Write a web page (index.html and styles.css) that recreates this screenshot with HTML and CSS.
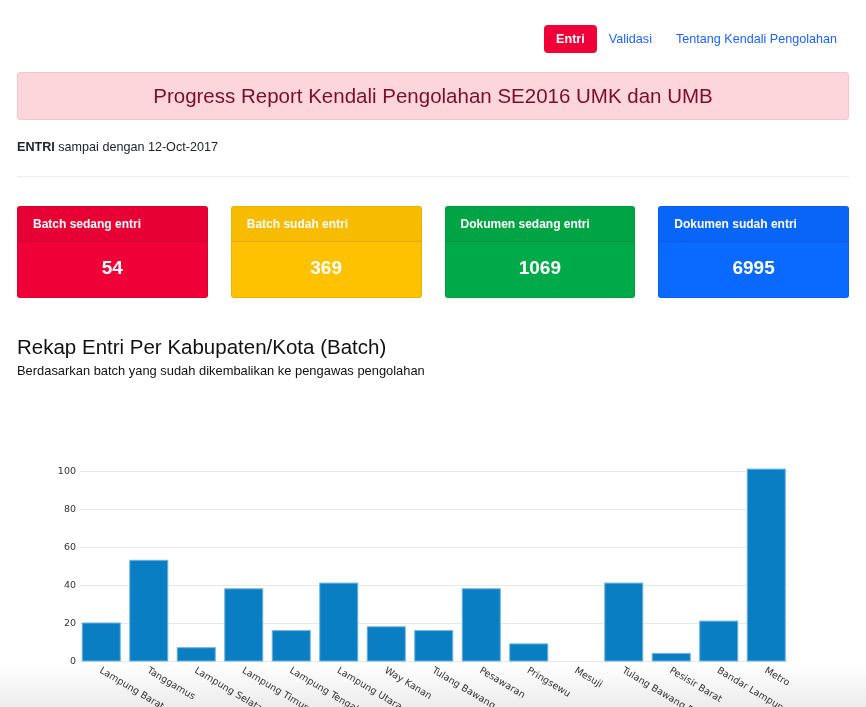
FILE: index.html
```html
<!DOCTYPE html>
<html lang="id">
<head>
<meta charset="utf-8">
<title>Progress Report Kendali Pengolahan</title>
<link rel="stylesheet" href="styles.css">
</head>
<body>
<div class="bottom-fade"></div>
<div class="container">
  <nav class="nav">
    <a class="nav-link active" href="#">Entri</a>
    <a class="nav-link" href="#">Validasi</a>
    <a class="nav-link" href="#">Tentang Kendali Pengolahan</a>
  </nav>

  <div class="alert">Progress Report Kendali Pengolahan SE2016 UMK dan UMB</div>

  <p class="status"><b>ENTRI</b> sampai dengan 12-Oct-2017</p>
  <hr class="divider">

  <div class="cards">
    <div class="card red"><div class="card-header">Batch sedang entri</div><div class="card-body">54</div></div>
    <div class="card yellow"><div class="card-header">Batch sudah entri</div><div class="card-body">369</div></div>
    <div class="card green"><div class="card-header">Dokumen sedang entri</div><div class="card-body">1069</div></div>
    <div class="card blue"><div class="card-header">Dokumen sudah entri</div><div class="card-body">6995</div></div>
  </div>

  <h2 class="section-title">Rekap Entri Per Kabupaten/Kota (Batch)</h2>
  <p class="section-sub">Berdasarkan batch yang sudah dikembalikan ke pengawas pengolahan</p>

  <svg class="chart" width="832" height="330" viewBox="17 390 832 330">
    <g class="grid">
      <line x1="80" x2="788" y1="470.5" y2="470.5"/>
      <line x1="80" x2="788" y1="508.5" y2="508.5"/>
      <line x1="80" x2="788" y1="546.5" y2="546.5"/>
      <line x1="80" x2="788" y1="584.5" y2="584.5"/>
      <line x1="80" x2="788" y1="622.5" y2="622.5"/>
      <line x1="80" x2="788" y1="660.5" y2="660.5"/>
    </g>
    <g class="ylabels">
      <text x="76" y="473">100</text>
      <text x="76" y="511">80</text>
      <text x="76" y="549">60</text>
      <text x="76" y="587">40</text>
      <text x="76" y="625">20</text>
      <text x="76" y="663">0</text>
    </g>
    <g class="bars">
      <rect x="82.25" y="622" width="38" height="38"/>
      <rect x="129.75" y="559.3" width="38" height="100.7"/>
      <rect x="177.25" y="646.7" width="38" height="13.3"/>
      <rect x="224.75" y="587.8" width="38" height="72.2"/>
      <rect x="272.25" y="629.6" width="38" height="30.4"/>
      <rect x="319.75" y="582.1" width="38" height="77.9"/>
      <rect x="367.25" y="625.8" width="38" height="34.2"/>
      <rect x="414.75" y="629.6" width="38" height="30.4"/>
      <rect x="462.25" y="587.8" width="38" height="72.2"/>
      <rect x="509.75" y="642.9" width="38" height="17.1"/>
      <rect x="604.75" y="582.1" width="38" height="77.9"/>
      <rect x="652.25" y="652.4" width="38" height="7.6"/>
      <rect x="699.75" y="620.1" width="38" height="39.9"/>
      <rect x="747.25" y="468.1" width="38" height="191.9"/>
    </g>
    <g class="xlabels">
      <text transform="translate(99 671) rotate(31)">Lampung Barat</text>
      <text transform="translate(146.5 671) rotate(31)">Tanggamus</text>
      <text transform="translate(194 671) rotate(31)">Lampung Selatan</text>
      <text transform="translate(241.5 671) rotate(31)">Lampung Timur</text>
      <text transform="translate(289 671) rotate(31)">Lampung Tengah</text>
      <text transform="translate(336.5 671) rotate(31)">Lampung Utara</text>
      <text transform="translate(384 671) rotate(31)">Way Kanan</text>
      <text transform="translate(431.5 671) rotate(31)">Tulang Bawang</text>
      <text transform="translate(479 671) rotate(31)">Pesawaran</text>
      <text transform="translate(526.5 671) rotate(31)">Pringsewu</text>
      <text transform="translate(574 671) rotate(31)">Mesuji</text>
      <text transform="translate(621.5 671) rotate(31)">Tulang Bawang Barat</text>
      <text transform="translate(669 671) rotate(31)">Pesisir Barat</text>
      <text transform="translate(716.5 671) rotate(31)">Bandar Lampung</text>
      <text transform="translate(764 671) rotate(31)">Metro</text>
    </g>
  </svg>
</div>
</body>
</html>
```

FILE: styles.css
```css
html, body {
  margin: 0;
  padding: 0;
  overflow: hidden;
}
html {
  background: #fff;
}
body {
  font-family: "Liberation Sans", Arial, sans-serif;
  color: #212529;
  font-size: 12.6px;
}
.container {
  position: relative;
  z-index: 1;
  padding: 0 17px;
}
.nav {
  display: flex;
  justify-content: flex-end;
  padding-top: 25px;
}
.nav-link {
  display: block;
  padding: 6px 12px;
  line-height: 16px;
  font-size: 12.6px;
  color: #1f63ff;
  text-decoration: none;
  border-radius: 4px;
}
.nav-link.active {
  background: #f00038;
  color: #fff;
  font-weight: bold;
}
.alert {
  margin-top: 19px;
  height: 46px;
  display: flex;
  align-items: center;
  justify-content: center;
  background: #fdd6db;
  border: 1px solid #fbc3cb;
  border-radius: 3px;
  color: #7b0c2a;
  font-size: 20.5px;
}
.status {
  margin: 19px 0 0;
  line-height: 17px;
}
.divider {
  margin: 20px 0 0;
  border: 0;
  border-top: 1px solid #ececec;
}
.cards {
  margin-top: 29px;
  display: grid;
  grid-template-columns: repeat(4, 1fr);
  column-gap: 23px;
}
.card {
  border-radius: 3px;
  color: #fff;
  height: 92px;
  display: flex;
  flex-direction: column;
  overflow: hidden;
  box-sizing: border-box;
  border: 1px solid rgba(0,0,0,0.08);
}
.card-header {
  height: 35px;
  box-sizing: border-box;
  padding: 10px 0 0 15px;
  font-size: 12px;
  font-weight: bold;
  background: rgba(0,0,0,0.03);
  border-bottom: 1px solid rgba(0,0,0,0.1);
}
.card-body {
  flex: 1;
  display: flex;
  align-items: center;
  justify-content: center;
  padding-bottom: 4px;
  font-size: 19px;
  font-weight: bold;
}
.red { background: #ef0036; }
.yellow { background: #ffc200; }
.green { background: #00aa48; }
.blue { background: #0a69ff; }

.section-title {
  margin: 37px 0 0;
  font-size: 20.5px;
  font-weight: normal;
  color: #111;
  line-height: 24px;
}
.section-sub {
  margin: 4px 0 0;
  font-size: 12.9px;
  line-height: 16px;
  color: #111;
}
.chart {
  display: block;
  margin-top: 12px;
  overflow: visible;
}
.grid line {
  stroke: #e8e8e8;
  stroke-width: 1;
}
.ylabels text {
  font-family: "DejaVu Sans", Verdana, sans-serif;
  font-size: 9.5px;
  fill: #333;
  text-anchor: end;
}
.bars rect {
  fill: #0a7ec2;
  stroke: #6fb3de;
  stroke-width: 1;
}
.xlabels text {
  font-family: "DejaVu Sans", Verdana, sans-serif;
  font-size: 9.5px;
  fill: #333;
}
.bottom-fade {
  position: fixed;
  z-index: 0;
  left: 0;
  right: 0;
  bottom: 0;
  height: 44px;
  background: linear-gradient(to bottom, rgba(238,238,238,0), rgba(236,236,236,1));
  pointer-events: none;
}
```
